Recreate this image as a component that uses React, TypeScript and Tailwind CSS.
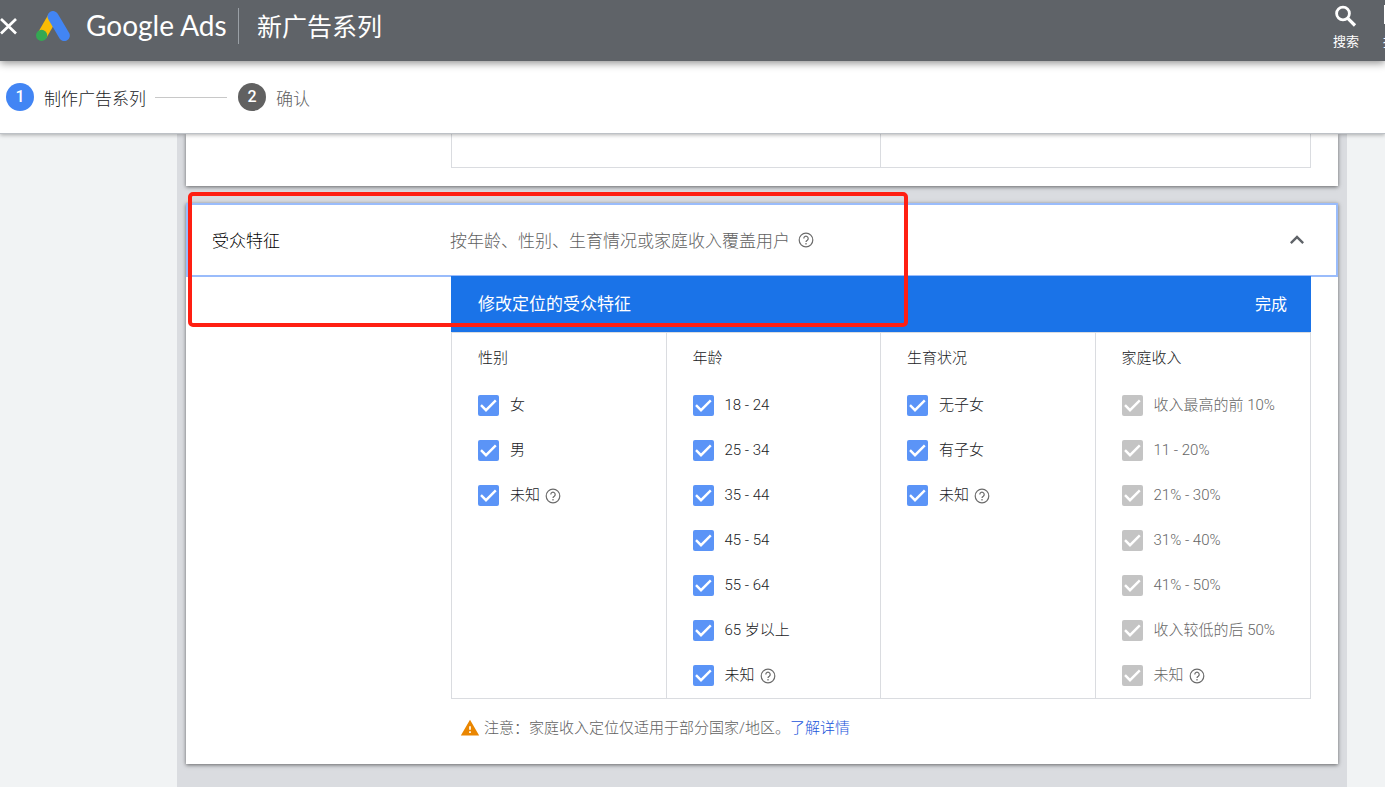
import { MdExpandLess, MdWarning } from 'react-icons/md'

type Option = { label: string; help?: boolean }
type Group = { title: string; disabled?: boolean; options: Option[] }

const groups: Group[] = [
  {
    title: '性别',
    options: [{ label: '女' }, { label: '男' }, { label: '未知', help: true }],
  },
  {
    title: '年龄',
    options: [
      { label: '18 - 24' },
      { label: '25 - 34' },
      { label: '35 - 44' },
      { label: '45 - 54' },
      { label: '55 - 64' },
      { label: '65 岁以上' },
      { label: '未知', help: true },
    ],
  },
  {
    title: '生育状况',
    options: [{ label: '无子女' }, { label: '有子女' }, { label: '未知', help: true }],
  },
  {
    title: '家庭收入',
    disabled: true,
    options: [
      { label: '收入最高的前 10%' },
      { label: '11 - 20%' },
      { label: '21% - 30%' },
      { label: '31% - 40%' },
      { label: '41% - 50%' },
      { label: '收入较低的后 50%' },
      { label: '未知', help: true },
    ],
  },
]

function AdsLogo() {
  return (
    <svg viewBox="0 0 34 30" className="w-[34px] h-[30px] shrink-0" fill="none" aria-hidden="true">
      <path d="M17 5.5 6 24.5" stroke="#fbbc04" strokeWidth="10" />
      <path d="M17 5.5 28.3 24.6" stroke="#4285f4" strokeWidth="11" strokeLinecap="round" />
      <circle cx="5.6" cy="24.4" r="5.6" fill="#34a853" />
    </svg>
  )
}

function Header() {
  return (
    <header className="relative z-20 flex items-center h-[61px] pb-[10px] bg-[#5f6368] text-white shadow-[0_2px_8px_rgba(0,0,0,0.45)]">
      <div className="flex flex-1 items-center min-w-0">
        <button type="button" aria-label="关闭" className="shrink-0">
          <svg viewBox="0 0 18 18" className="w-[18px] h-[18px]" stroke="currentColor" strokeWidth="2.7">
            <path d="M1 2 16 16.5M16 2 1 16.5" />
          </svg>
        </button>
        <a href="#" className="flex items-center ml-[18px]">
          <AdsLogo />
          <span className="ml-4 w-[138px] pb-[2px] font-['Lato'] text-[28px] leading-9 whitespace-nowrap">Google Ads</span>
        </a>
        <div className="ml-[14px] w-px h-9 bg-[#9aa0a6]" />
        <h1 className="ml-[18px] pt-1 text-[25px] leading-9 whitespace-nowrap">新广告系列</h1>
      </div>

      {/* The last tool runs off the right edge */}
      <div className="w-[52px] shrink-0 overflow-hidden">
        <div className="flex gap-6 w-max">
          <button type="button" className="flex flex-col items-center w-[26px]">
            <svg viewBox="0 0 28 28" className="w-7 h-7 shrink-0" fill="none" stroke="currentColor" strokeWidth="2.8">
              <circle cx="11" cy="11.5" r="6.4" />
              <path d="M15.6 16.2 23 23.5" strokeWidth="3.2" />
            </svg>
            <span className="mt-1 text-[13px] leading-4">搜索</span>
          </button>
          <button type="button" className="flex flex-col items-center w-[26px]">
            <svg viewBox="0 0 28 28" className="w-7 h-7 shrink-0" fill="none" stroke="currentColor" strokeWidth="2">
              <path d="M3 4h22v17H3zM9 12v5M14 8v9M19 14v3" />
            </svg>
            <span className="mt-1 text-[13px] leading-4">报告</span>
          </button>
        </div>
      </div>
    </header>
  )
}

function Stepper() {
  return (
    <nav className="relative z-10 h-[73px] bg-white border-b border-[#bdc1c6] shadow-[0_1px_4px_rgba(0,0,0,0.3)]">
      <ol className="flex items-center h-full pl-[6px] text-[17px] leading-6">
        <li className="flex items-center text-[#202124]">
          <span className="flex items-center justify-center w-7 h-7 rounded-full bg-[#4285f4] text-white text-[16px] font-medium">1</span>
          <span className="ml-[10px] pt-1 font-light">制作广告系列</span>
        </li>
        <li aria-hidden="true" className="ml-[9px] mr-[11px] w-[72px] h-px bg-[#c8c8c8]" />
        <li className="flex items-center text-[#616161]">
          <span className="flex items-center justify-center w-7 h-7 rounded-full bg-[#616161] text-white text-[16px] font-medium">2</span>
          <span className="ml-[10px] pt-1 font-light">确认</span>
        </li>
      </ol>
    </nav>
  )
}

function HelpButton() {
  return (
    <button type="button" aria-label="帮助" className="shrink-0 text-[#6b6b6b]">
      <svg viewBox="0 0 18 18" className="w-[18px] h-[18px]" fill="none" stroke="currentColor" strokeWidth="1.2">
        <circle cx="9" cy="9" r="6.8" />
        <path d="M6.8 7.4a2.2 2.2 0 1 1 3.5 1.8C9.4 9.8 9 10.1 9 11M9 12v1.4" />
      </svg>
    </button>
  )
}

function OptionRow({ option, disabled }: { option: Option; disabled?: boolean }) {
  return (
    <li className="flex items-center gap-1 h-[45px]">
      <label className="flex items-center gap-[11px]">
        <span className="grid">
          <input
            type="checkbox"
            defaultChecked
            disabled={disabled}
            className="peer appearance-none [grid-area:1/1] w-[21px] h-[21px] rounded-[2px] border-2 border-[#757575] checked:border-0 checked:bg-[#5b94f7] disabled:checked:bg-[#c4c4c4]"
          />
          <svg
            viewBox="0 0 21 21"
            className="[grid-area:1/1] w-[21px] h-[21px] pointer-events-none hidden peer-checked:block"
            fill="none"
            stroke="white"
            strokeWidth="2.4"
          >
            <path d="M3 10.2 8 15.2 17.8 5.4" />
          </svg>
        </span>
        <span className={disabled ? 'pb-[2px] text-[#666666]' : 'pb-[2px] text-[#202124]'}>{option.label}</span>
      </label>
      {option.help && <HelpButton />}
    </li>
  )
}

function DemographicsCard() {
  return (
    <section className="relative mt-[17px] pb-2 bg-white shadow-[0_1px_4px_rgba(0,0,0,0.55)]">
      <div className="flex items-center h-[74px] pl-6 pr-[25px] border-2 border-[#9abcfb] text-[17px] leading-6 font-light">
        <h2 className="w-[238px] pt-[2px] shrink-0 text-black">受众特征</h2>
        <p className="flex flex-1 items-center gap-[7px] text-[#616161]">
          <span className="pt-[2px]">按年龄、性别、生育情况或家庭收入覆盖用户</span>
          <HelpButton />
        </p>
        <button type="button" aria-label="收起" className="text-[#5f6368]">
          <MdExpandLess className="w-7 h-7" />
        </button>
      </div>

      <div className="relative -mt-px ml-[265px] mr-[27px]">
        <div className="flex items-center justify-between h-14 pl-[27px] pr-6 bg-[#1a73e8] text-white">
          <h3 className="text-[17px] leading-6">修改定位的受众特征</h3>
          <button type="button" className="pt-[2px] text-[16px] leading-6">完成</button>
        </div>
        <div className="grid grid-cols-4 border border-[#dadce0] text-[15px] leading-5 font-light">
          {groups.map((group) => (
            <div key={group.title} className="pl-[26px] border-r border-[#dadce0] last:border-r-0">
              <fieldset>
                <legend className="h-[50px] pt-[15px] text-[#202124]">{group.title}</legend>
                <ul>
                  {group.options.map((option) => (
                    <OptionRow key={option.label} option={option} disabled={group.disabled} />
                  ))}
                </ul>
              </fieldset>
            </div>
          ))}
        </div>
        <p className="flex items-center h-[57px] pl-[9px] text-[15px] leading-5 font-light text-[#616161]">
          <MdWarning className="w-5 h-5 mr-1 shrink-0 text-[#ea8600]" />
          注意：家庭收入定位仅适用于部分国家/地区。
          <a href="#" className="text-[#1a56db]">了解详情</a>
        </p>
      </div>

      {/* Highlight frame */}
      <div className="absolute left-[2px] -top-[11px] w-[720px] h-[135px] border-4 border-[#ff1f12] rounded-[5px] pointer-events-none" />
    </section>
  )
}

export default function App() {
  return (
    <div className="flex flex-col min-h-screen bg-[#f1f3f4] font-['Roboto','Noto_Sans_CJK_SC',sans-serif]">
      <Header />
      <Stepper />
      <main className="flex flex-1 pl-[177px] pr-[38px]">
        <div className="flex-1 px-[9px] pb-[22px] bg-[#dadce0]">
          {/* Tail of the previous card */}
          <section className="pl-[265px] pr-[27px] pb-[18px] bg-white shadow-[0_1px_4px_rgba(0,0,0,0.55)]">
            <div className="grid grid-cols-2 h-[34px] border border-t-0 border-[#dadce0] divide-x divide-[#dadce0]">
              <div />
              <div />
            </div>
          </section>
          <DemographicsCard />
        </div>
      </main>
    </div>
  )
}
